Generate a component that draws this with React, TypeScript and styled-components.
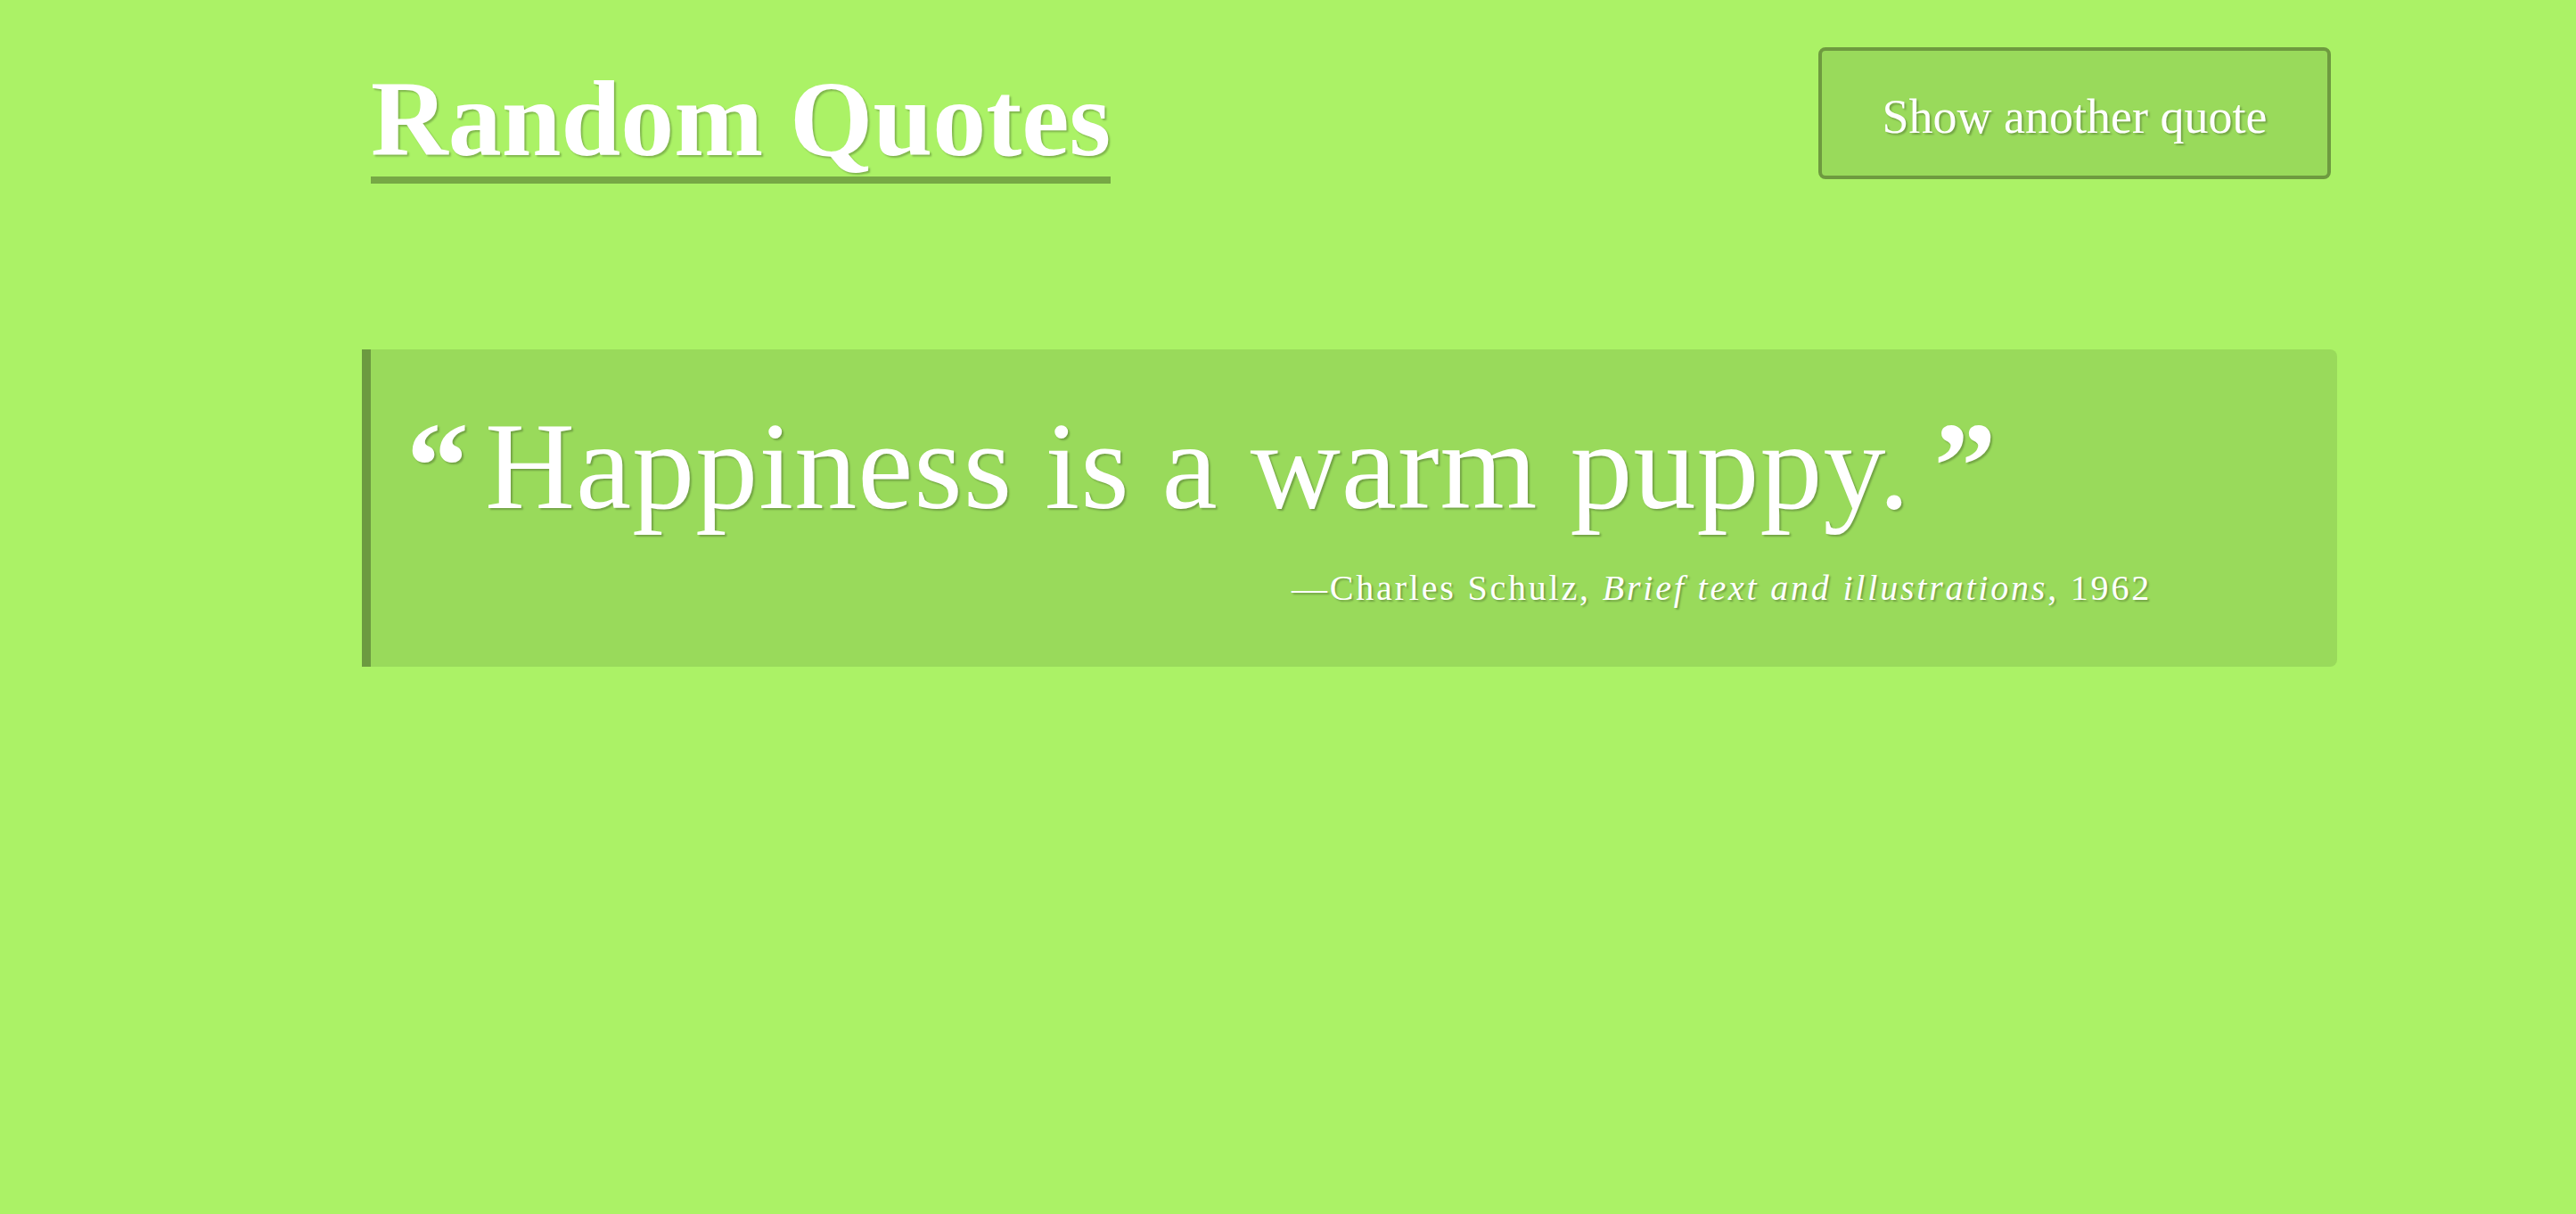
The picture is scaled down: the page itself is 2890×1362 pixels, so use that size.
import React from "react";
import styled, { createGlobalStyle } from "styled-components";

const GlobalStyle = createGlobalStyle`
  html, body {
    margin: 0;
    padding: 0;
    background: #abf266;
  }
  body {
    font-family: "Liberation Serif", "Times New Roman", serif;
    color: #ffffff;
    min-height: 1362px;
  }
`;

const Page = styled.div`
  width: 2216px;
  padding-left: 406px;
`;

const Header = styled.header`
  display: flex;
  justify-content: space-between;
  align-items: flex-start;
  padding: 53px 7px 0 10px;
`;

const Title = styled.h1`
  margin: 21px 0 0 0;
  font-family: "Liberation Serif", "Times New Roman", serif;
  font-weight: 700;
  font-size: 120px;
  line-height: 120px;
  padding-bottom: 4px;
  border-bottom: 8px solid #76a845;
  color: #ffffff;
  text-shadow: 2px 2px 2px rgba(0, 0, 0, 0.25);
`;

const Button = styled.button`
  box-sizing: border-box;
  width: 575px;
  height: 148px;
  padding: 8px 0 0 0;
  display: flex;
  align-items: center;
  justify-content: center;
  background: #99da5b;
  border: 4px solid #6e9a3f;
  border-radius: 8px;
  color: #ffffff;
  font-family: "Liberation Serif", "Times New Roman", serif;
  font-size: 54px;
  text-shadow: 2px 2px 2px rgba(0, 0, 0, 0.25);
  cursor: pointer;
`;

const Quote = styled.blockquote`
  margin: 186px 0 0 0;
  box-sizing: border-box;
  height: 356px;
  padding: 61px 0 0 40px;
  background: #99da5b;
  border-left: 10px solid #6c9a40;
  border-radius: 0 8px 8px 0;
  text-shadow: 2px 2px 2px rgba(0, 0, 0, 0.25);
`;

const QuoteText = styled.p`
  margin: 0;
  font-size: 140px;
  line-height: 140px;
  letter-spacing: 1px;
  white-space: nowrap;
`;

const Mark = styled.span<{ $side: "open" | "close" }>`
  font-weight: 700;
  letter-spacing: 0;
  margin-right: ${(p) => (p.$side === "open" ? "18px" : "0")};
  margin-left: ${(p) => (p.$side === "close" ? "26px" : "0")};
`;

const Cite = styled.footer`
  margin-top: 44px;
  padding-right: 208px;
  text-align: right;
  font-size: 40px;
  line-height: 46px;
  letter-spacing: 2.8px;
`;

const Work = styled.i`
  font-style: italic;
`;

export default function App() {
  return (
    <>
      <GlobalStyle />
      <Page>
        <Header>
          <Title>Random Quotes</Title>
          <Button>Show another quote</Button>
        </Header>
        <Quote>
          <QuoteText>
            <Mark $side="open">“</Mark>Happiness is a warm puppy.
            <Mark $side="close">”</Mark>
          </QuoteText>
          <Cite>
            —Charles Schulz, <Work>Brief text and illustrations</Work>, 1962
          </Cite>
        </Quote>
      </Page>
    </>
  );
}
